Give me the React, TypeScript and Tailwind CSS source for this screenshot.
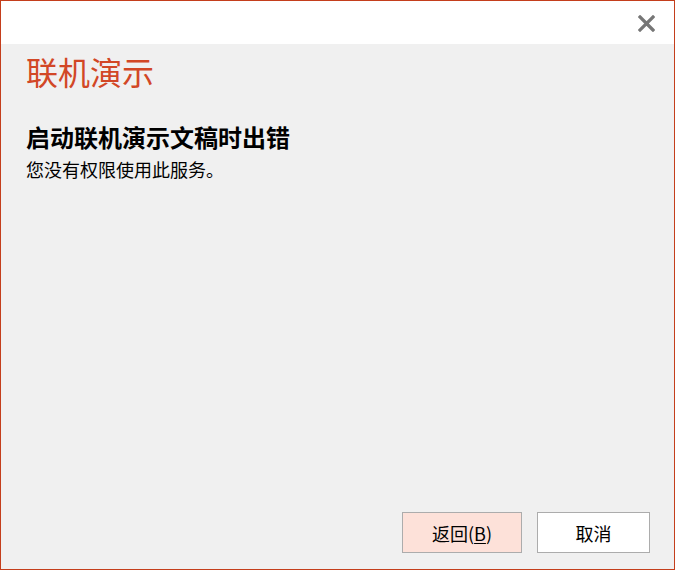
import React from "react";

export default function App() {
  const cjk = { fontFamily: '"Microsoft YaHei", "Noto Sans CJK SC", "Noto Sans", sans-serif' };
  return (
    <div className="w-[675px] h-[570px] border border-[#c43e1c] flex flex-col bg-[#f0f0f0]" style={cjk}>
      <div className="h-[43px] bg-white flex justify-end items-start pr-[19px] pt-[14px]">
        <svg width="17" height="17" viewBox="0 0 17 17">
          <path d="M2 2 L15 15 M15 2 L2 15" stroke="#767676" strokeWidth="3.2" strokeLinecap="square" />
        </svg>
      </div>
      <div className="flex-1 flex flex-col pl-[25px] pr-[24px] pt-[11px] pb-[16px]">
        <div className="text-[32px] leading-none text-[#d24726]">联机演示</div>
        <div className="mt-[38px] text-[24px] leading-none font-bold text-black">启动联机演示文稿时出错</div>
        <div className="mt-[11px] text-[18px] leading-none text-black">您没有权限使用此服务。</div>
        <div className="flex-1" />
        <div className="flex justify-end gap-[15px]">
          <button className="w-[120px] h-[41px] bg-[#fde1d9] border border-[#acacac] text-[18px] text-black flex items-center justify-center leading-none">
            返回(<span className="underline underline-offset-2">B</span>)
          </button>
          <button className="w-[113px] h-[41px] bg-white border border-[#acacac] text-[18px] text-black flex items-center justify-center leading-none">
            取消
          </button>
        </div>
      </div>
    </div>
  );
}
